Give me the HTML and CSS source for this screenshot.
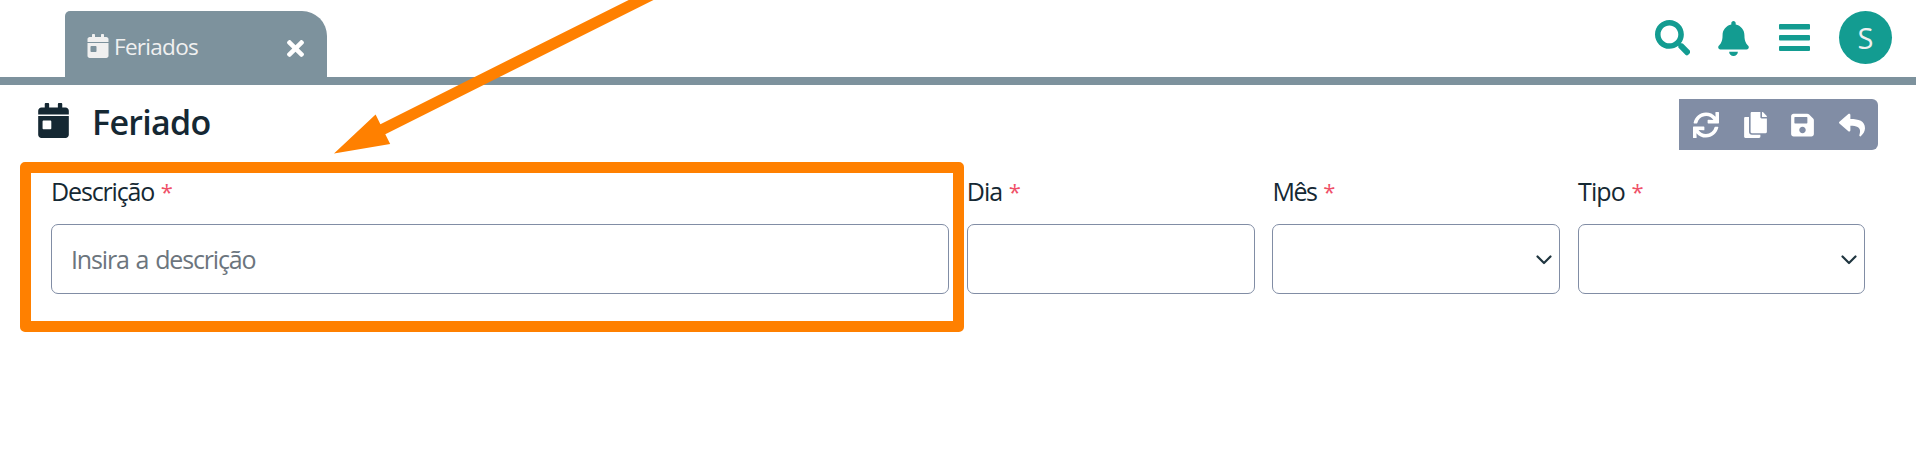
FILE: index.html
```html
<!DOCTYPE html>
<html lang="pt-BR">
<head>
<meta charset="utf-8">
<title>Feriado</title>
<link rel="stylesheet" href="styles.css">
</head>
<body>
<svg class="defs" aria-hidden="true">
  <symbol id="calendar" viewBox="0 0 448 512"><path d="M0 464c0 26.500 21.500 48 48 48h352c26.500 0 48-21.500 48-48V190H0v274zm64-192c0-8.800 7.200-16 16-16h96c8.800 0 16 7.200 16 16v96c0 8.800-7.200 16-16 16H80c-8.800 0-16-7.200-16-16v-96zM400 64h-48V16c0-8.800-7.200-16-16-16h-32c-8.800 0-16 7.200-16 16v48H160V16c0-8.800-7.200-16-16-16h-32c-8.800 0-16 7.200-16 16v48H48C21.500 64 0 85.500 0 112v56h448v-56c0-26.500-21.500-48-48-48z"/></symbol>
</svg>
<header class="topbar">
  <div class="tab">
    <svg class="tab-icon"><use href="#calendar"/></svg>
    <span class="tab-label">Feriados</span>
    <svg class="tab-close" viewBox="0 80 352 352"><path d="M242.720 256l100.070-100.070c12.280-12.280 12.280-32.190 0-44.480l-22.240-22.240c-12.280-12.280-32.190-12.280-44.480 0L176 189.280 75.930 89.210c-12.280-12.280-32.190-12.280-44.480 0L9.210 111.450c-12.280 12.280-12.280 32.190 0 44.480L109.280 256 9.210 356.070c-12.280 12.280-12.280 32.190 0 44.480l22.240 22.240c12.280 12.280 32.200 12.280 44.480 0L176 322.720l100.070 100.070c12.280 12.280 32.200 12.280 44.480 0l22.240-22.240c12.280-12.280 12.280-32.190 0-44.480L242.720 256z"/></svg>
  </div>
  <nav class="actions">
    <svg class="search" viewBox="0 0 512 512"><path d="M505 442.700L405.300 343c-4.500-4.500-10.600-7-17-7H372c27.600-35.300 44-79.700 44-128C416 93.100 322.900 0 208 0S0 93.100 0 208s93.100 208 208 208c48.300 0 92.700-16.400 128-44v16.300c0 6.400 2.500 12.500 7 17l99.700 99.700c9.400 9.400 24.600 9.400 33.900 0l28.300-28.300c9.400-9.400 9.400-24.600.1-34zM208 336c-70.700 0-128-57.200-128-128 0-70.700 57.200-128 128-128 70.700 0 128 57.200 128 128 0 70.700-57.200 128-128 128z"/></svg>
    <svg class="bell" viewBox="0 0 448 512"><path d="M224 512c35.320 0 63.970-28.650 63.970-64H160.030c0 35.350 28.650 64 63.970 64zm215.390-149.710c-19.320-20.760-55.470-51.990-55.470-154.290 0-77.700-54.480-139.900-127.940-155.160V32c0-17.670-14.320-32-31.980-32s-31.980 14.330-31.980 32v20.840C118.560 68.100 64.080 130.300 64.080 208c0 102.300-36.150 133.530-55.470 154.290-6 6.450-8.660 14.160-8.610 21.710.11 16.400 12.980 32 32.100 32h383.800c19.120 0 32-15.600 32.100-32 .05-7.550-2.610-15.270-8.610-21.710z"/></svg>
    <svg class="bars" viewBox="0 0 31 27"><rect width="31" height="5.400" rx="1"/><rect y="11" width="31" height="5.400" rx="1"/><rect y="22" width="31" height="5" rx="1"/></svg>
    <span class="avatar">S</span>
  </nav>
</header>
<main>
  <div class="heading">
    <svg class="heading-icon"><use href="#calendar"/></svg>
    <h1>Feriado</h1>
    <div class="toolbar">
      <svg class="wide" viewBox="0 0 512 512"><path d="M440.650 12.570l4 82.770A247.160 247.160 0 0 0 255.830 8C134.730 8 33.910 94.920 12.290 209.820A12 12 0 0 0 24.090 224h49.050a12 12 0 0 0 11.670-9.260 175.910 175.910 0 0 1 317-56.940l-101.460-4.860a12 12 0 0 0-12.570 12v47.410a12 12 0 0 0 12 12H500a12 12 0 0 0 12-12V12a12 12 0 0 0-12-12h-47.370a12 12 0 0 0-11.980 12.570zM255.830 432a175.610 175.610 0 0 1-146-77.800l101.800 4.870a12 12 0 0 0 12.570-12v-47.400a12 12 0 0 0-12-12H12a12 12 0 0 0-12 12V500a12 12 0 0 0 12 12h47.350a12 12 0 0 0 12-12.600l-4.150-82.570A247.170 247.170 0 0 0 255.830 504c121.110 0 221.930-86.920 243.550-201.820a12 12 0 0 0-11.800-14.180h-49.050a12 12 0 0 0-11.670 9.260A175.860 175.860 0 0 1 255.830 432z"/></svg>
      <svg class="narrow" viewBox="0 0 448 512"><path d="M320 448v40c0 13.255-10.745 24-24 24H24c-13.255 0-24-10.745-24-24V120c0-13.255 10.745-24 24-24h72v296c0 30.879 25.121 56 56 56h168zm0-344V0H152c-13.255 0-24 10.745-24 24v368c0 13.255 10.745 24 24 24h272c13.255 0 24-10.745 24-24V128H344c-13.200 0-24-10.800-24-24zm120.971-31.029L375.029 7.029A24 24 0 0 0 358.059 0H352v96h96v-6.059a24 24 0 0 0-7.029-16.970z"/></svg>
      <svg class="narrow" viewBox="0 0 448 512"><path d="M433.941 129.941l-83.882-83.882A48 48 0 0 0 316.118 32H48C21.490 32 0 53.490 0 80v352c0 26.510 21.490 48 48 48h352c26.510 0 48-21.490 48-48V163.882a48 48 0 0 0-14.059-33.941zM224 416c-35.346 0-64-28.654-64-64 0-35.346 28.654-64 64-64s64 28.654 64 64c0 35.346-28.654 64-64 64zm96-304.520V212c0 6.627-5.373 12-12 12H76c-6.627 0-12-5.373-12-12V108c0-6.627 5.373-12 12-12h228.520c3.183 0 6.235 1.264 8.485 3.515l3.480 3.480A11.996 11.996 0 0 1 320 111.480z"/></svg>
      <svg class="wide" viewBox="0 0 512 512"><path d="M8.309 189.836L184.313 37.851C199.719 24.546 224 35.347 224 56.015v80.053c160.629 1.839 288 34.032 288 186.258 0 61.441-39.581 122.309-83.333 154.132-13.653 9.931-33.111-2.533-28.077-18.631 45.344-145.012-21.507-183.510-176.590-185.742V360c0 20.700-24.300 31.453-39.687 18.164l-176.004-152c-11.071-9.562-11.086-26.753 0-36.328z"/></svg>
    </div>
  </div>
  <form class="fields">
    <div class="field">
      <div class="label"><span class="descricao">Descrição</span><span class="req">*</span></div>
      <div class="box"><span class="placeholder">Insira a descrição</span></div>
    </div>
    <div class="field">
      <div class="label"><span class="dia">Dia</span><span class="req">*</span></div>
      <div class="box"></div>
    </div>
    <div class="field">
      <div class="label"><span class="mes">Mês</span><span class="req">*</span></div>
      <div class="box select"><svg viewBox="0 0 16 10"><path d="M1.500 1.500L8 8l6.500-6.500"/></svg></div>
    </div>
    <div class="field">
      <div class="label"><span class="tipo">Tipo</span><span class="req">*</span></div>
      <div class="box select"><svg viewBox="0 0 16 10"><path d="M1.500 1.500L8 8l6.500-6.500"/></svg></div>
    </div>
  </form>
</main>
<div class="highlight"></div>
<svg class="arrow" viewBox="0 0 660 160"><path d="M334 153.600L375.600 114.500L380.400 124.200L628.700 0H653.500L385.300 134.200L390.200 144Z"/></svg>
</body>
</html>
```
FILE: styles.css
```css
* { box-sizing: border-box; }
body {
  margin: 0;
  height: 450px;
  overflow: hidden;
  position: relative;
  background: #fff;
  color: #152833;
  font-family: "Open Sans", "Noto Sans", sans-serif;
}
svg { display: block; flex: none; }
.defs { position: absolute; width: 0; height: 0; }

.topbar {
  height: 85px;
  border-bottom: 8px solid #7d929d;
  padding: 11px 24px 0 65px;
  display: flex;
  justify-content: space-between;
  align-items: flex-start;
}
.tab {
  width: 262px;
  height: 66px;
  padding: 4px 23px 0 22px;
  display: flex;
  align-items: center;
  background: #7d929d;
  border-radius: 5px 25px 0 0;
  color: #f0f0f0;
  fill: #f0f0f0;
}
.tab-icon { width: 22px; height: 24px; }
.tab-label { margin-left: 5px; font-size: 22.500px; letter-spacing: -0.700px; flex: 1; white-space: nowrap; }
.tab-close { width: 17px; height: 17px; fill: #fff; margin-top: 5px; }
.actions { display: flex; align-items: center; height: 53px; fill: #139c91; }
.search { width: 35.500px; height: 35.500px; margin-top: 1px; }
.bell { width: 31px; height: 35px; margin: 1px 0 0 28px; }
.bars { width: 31px; height: 27px; margin-left: 30px; }
.avatar {
  width: 53px;
  height: 53px;
  margin-left: 29px;
  border-radius: 50%;
  background: #139c91;
  color: #f0f0f0;
  font-size: 29px;
  line-height: 54px;
  text-align: center;
}

.heading { display: flex; align-items: flex-start; padding: 14px 38px 0 38px; height: 65px; fill: #152833; }
.heading-icon { width: 31px; height: 35px; margin-top: 4px; }
h1 { margin: 0 0 0 23px; font-size: 34px; font-weight: 600; line-height: 46px; letter-spacing: -0.700px; flex: 1; }
.toolbar {
  width: 199px;
  height: 51px;
  padding: 0 13px 0 14px;
  display: flex;
  align-items: center;
  justify-content: space-between;
  background: #818da5;
  border-radius: 0 6px 6px 0;
  fill: #fff;
}
.wide { width: 26px; height: 26px; }
.narrow { width: 23px; height: 26px; }

.fields {
  display: grid;
  grid-template-columns: 898px 288px 288px 287px;
  column-gap: 17.700px;
  padding: 24px 51px 0;
}
.label { height: 50px; display: flex; font-size: 25px; line-height: 34px; letter-spacing: -0.900px; white-space: nowrap; }
.descricao { letter-spacing: -1.150px; }
.mes { letter-spacing: -1.400px; }
.req { margin-left: 6.500px; color: #ef5068; font-size: 22px; }
.box {
  height: 70px;
  border: 1px solid #818da5;
  border-radius: 7px;
  display: flex;
  align-items: center;
  padding-left: 19px;
}
.placeholder { color: #6c757d; font-size: 25px; letter-spacing: -1.150px; word-spacing: 1.500px; white-space: nowrap; }
.select { justify-content: flex-end; padding-right: 7px; }
.select svg { width: 16px; height: 10px; margin-top: 1px; }
.select path { fill: none; stroke: #203640; stroke-width: 2.200; stroke-linecap: round; stroke-linejoin: round; }

/* Callout drawn over the form */
.highlight {
  position: absolute;
  left: 20px;
  top: 162px;
  width: 944px;
  height: 170px;
  border: 11px solid #ff8000;
  border-radius: 5px;
}
.arrow { position: absolute; left: 0; top: 0; width: 660px; height: 160px; fill: #ff8000; }
```
